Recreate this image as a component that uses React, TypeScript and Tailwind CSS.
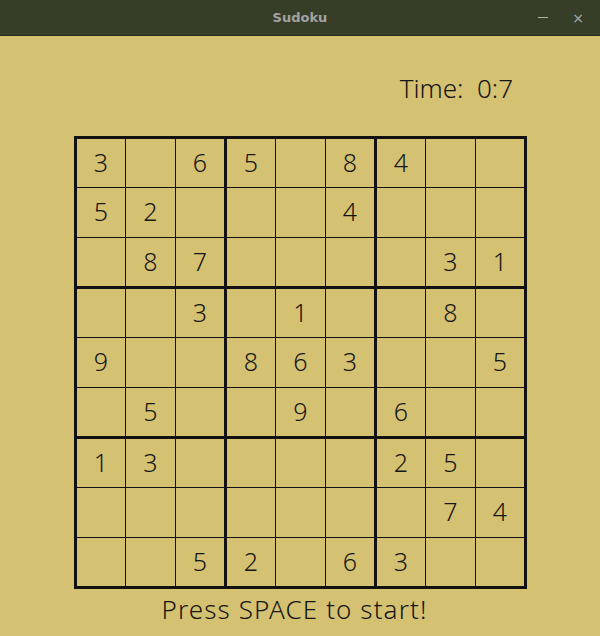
import React from 'react';

const board: number[][] = [
  [3, 0, 6, 5, 0, 8, 4, 0, 0],
  [5, 2, 0, 0, 0, 4, 0, 0, 0],
  [0, 8, 7, 0, 0, 0, 0, 3, 1],
  [0, 0, 3, 0, 1, 0, 0, 8, 0],
  [9, 0, 0, 8, 6, 3, 0, 0, 5],
  [0, 5, 0, 0, 9, 0, 6, 0, 0],
  [1, 3, 0, 0, 0, 0, 2, 5, 0],
  [0, 0, 0, 0, 0, 0, 0, 7, 4],
  [0, 0, 5, 2, 0, 6, 3, 0, 0],
];

const font = { fontFamily: '"Noto Sans", Lato, sans-serif' };

function TitleBar() {
  return (
    <div className="relative h-[36px] bg-[#363e28] flex items-center justify-center border-b border-[#2a2f1c]">
      <span className="text-[13px] font-bold text-[#a3a3a3]" style={{ fontFamily: '"DejaVu Sans", sans-serif' }}>
        Sudoku
      </span>
      <div className="absolute right-0 top-0 h-full flex items-center">
        <span className="w-[10px] h-[1px] bg-[#b0b0b0] mr-[24px]" />
        <span className="text-[#b0b0b0] text-[14px] leading-none mr-[16px]" style={{ fontFamily: '"DejaVu Sans", sans-serif' }}>
          ×
        </span>
      </div>
    </div>
  );
}

function Box({ b }: { b: number }) {
  const cells = [];
  for (let c = 0; c < 9; c++) {
    const row = 3 * Math.floor(b / 3) + Math.floor(c / 3);
    const col = 3 * (b % 3) + (c % 3);
    const v = board[row][col];
    cells.push(
      <div key={c} className="bg-[#d5c172] flex items-center justify-center text-[25px] font-light text-[#161616] leading-none pb-[2px]">
        {v ? v : ''}
      </div>
    );
  }
  return (
    <div className="grid grid-cols-[48px_49px_48px] grid-rows-[48px_49px_48px] gap-[1px]">{cells}</div>
  );
}

export default function App() {
  return (
    <div className="w-[600px] h-[636px] bg-[#d5c172] overflow-hidden" style={font}>
      <TitleBar />
      <div className="flex justify-end pr-[87px] pt-[39px]">
        <span className="text-[26px] leading-none font-light text-[#161616] whitespace-pre">Time:  0:7</span>
      </div>
      <div className="ml-[74px] mt-[35px] w-[453px] bg-[#111] p-[3px] grid grid-cols-3 gap-[3px]">
        {[0, 1, 2, 3, 4, 5, 6, 7, 8].map((b) => (
          <Box key={b} b={b} />
        ))}
      </div>
      <div className="mt-[7px] pr-[11px] text-center text-[26px] leading-none font-light text-[#161616] tracking-[1.1px]">
        Press SPACE to start!
      </div>
    </div>
  );
}
